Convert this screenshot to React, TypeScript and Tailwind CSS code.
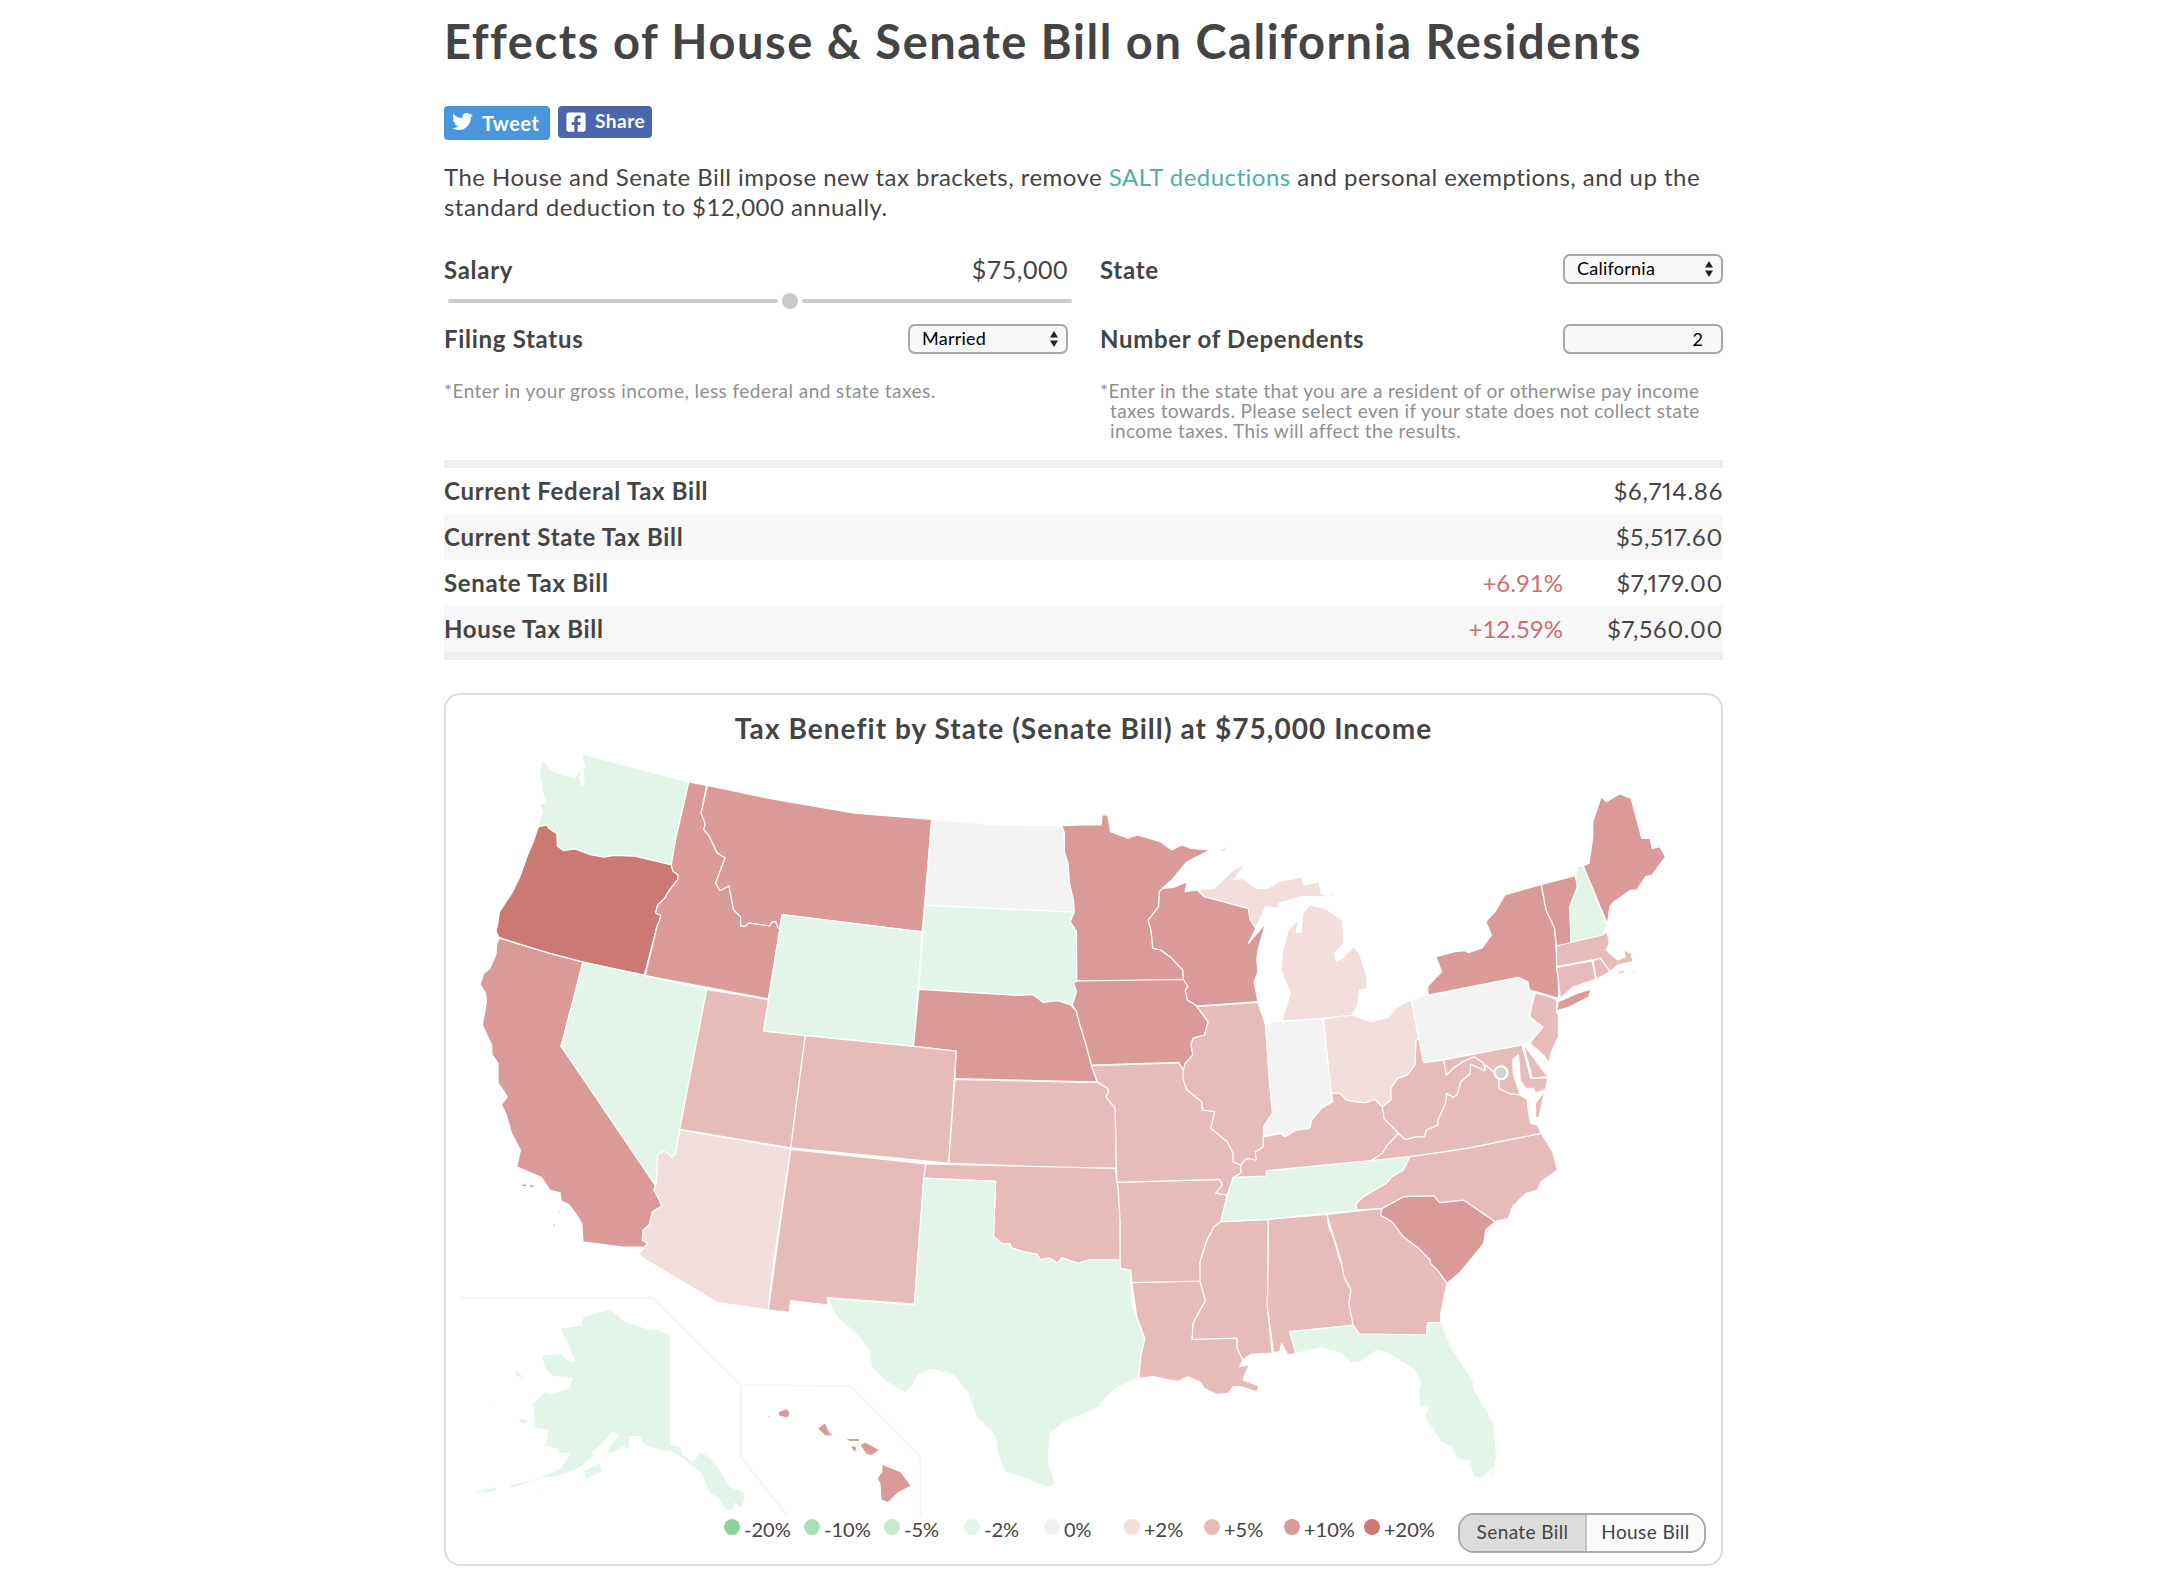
import { FaTwitter, FaFacebookSquare } from "react-icons/fa";

const Z: Record<string, [number, number, number, number]> = {
  a: [440, 740, 2.412, 2.8],
  b: [1080, 780, 2.613, 3],
  c: [440, 1260, 2.376, 3],
  d: [1100, 1260, 2.45, 3],
};
function pts(...segs: string[]) {
  const out: string[] = [];
  for (const s of segs) {
    const [ox, oy, kx, ky] = Z[s[0]];
    for (const m of s.slice(1).matchAll(/\((-?[\d.]+),(-?[\d.]+)\)/g)) {
      out.push(`${(ox + +m[1] / kx).toFixed(1)},${(oy + +m[2] / ky).toFixed(1)}`);
    }
  }
  return out.join(" ");
}
const G = "#e3f4e8", N = "#f3f3f3", P2 = "#f2dedd", P5 = "#e6bbb9", P10 = "#da9a98", P20 = "#cc7873";

const STATES: [string, string[]][] = [
  [G, ["a(345,40)(600,117)(590,170)(570,270)(562,320)(560,350)(470,325)(420,327)(415,322)(395,328)(360,320)(325,305)(298,310)(283,297)(282,262)(262,247)(258,238)(237,240)(240,225)(248,200)(240,180)(255,175)(248,150)(245,120)(240,95)(245,60)(252,60)(265,82)(290,95)(325,105)(335,90)(342,92)(336,105)(340,125)(348,128)(345,90)(350,75)(342,45)"]],
  [P20, ["a(237,243)(258,238)(262,247)(282,262)(283,297)(298,310)(325,305)(360,320)(395,328)(420,323)(470,325)(558,350)(562,367)(574,378)(573,392)(560,410)(548,430)(543,442)(525,462)(520,485)(532,490)(530,505)(524,520)(493,658)(345,622)(260,596)(143,553)(135,538)(140,510)(143,482)(175,425)(192,385)(212,320)(225,285)"]],
  [P10, ["a(143,555)(260,596)(345,622)(292,857)(520,1245)(516,1260)(528,1285)(535,1305)(512,1322)(505,1358)(490,1372)(488,1400)(500,1408)(495,1420)(440,1420)(345,1405)(342,1355)(330,1330)(310,1300)(292,1290)(290,1268)(265,1260)(245,1225)(205,1205)(185,1195)(194,1148)(172,1100)(160,1050)(148,1020)(162,1000)(155,985)(140,960)(140,905)(125,880)(125,855)(102,798)(108,760)(112,730)(110,710)(97,685)(105,655)(120,640)(135,600)(137,570)"]],
  [P10, ["a(196,1242)(208,1243)(210,1252)(198,1250)"]],
  [P10, ["a(213,1240)(235,1252)(218,1253)"]],
  [P10, ["a(276,1310)(290,1320)(288,1327)"]],
  [P10, ["a(270,1345)(280,1362)(273,1362)"]],
  [P10, ["a(600,117)(643,127)(630,205)(640,235)(636,250)(650,270)(668,315)(688,330)(665,400)(675,422)(697,408)(708,475)(725,495)(725,520)(735,522)(745,512)(780,518)(795,520)(800,510)(810,508)(815,525)(820,530)(792,725)(495,660)(524,520)(530,505)(532,490)(520,485)(525,462)(543,442)(548,430)(560,410)(573,392)(574,378)(562,367)(558,350)(562,320)(570,270)(590,170)"]],
  [P10, ["a(645,127)(800,165)(1000,205)(1186,222)(1163,537)(825,489)(820,530)(815,525)(810,508)(800,510)(795,520)(780,518)(745,512)(735,522)(725,520)(725,495)(708,475)(697,408)(675,422)(665,400)(688,330)(668,315)(650,270)(636,250)(640,235)(630,205)"]],
  [N, ["a(1186,222)(1350,238)(1500,240)(1506,260)(1506,315)(1515,345)(1518,400)(1528,450)(1530,482)(1170,463)"]],
  [G, ["a(825,489)(1163,537)(1142,858)(780,815)"]],
  [G, ["a(1170,463)(1530,482)(1520,510)(1535,535)(1536,673)(1528,680)(1535,705)(1525,742)(1490,730)(1455,735)(1430,712)(1395,715)(1155,697)"]],
  [P10, ["a(1155,698)(1395,715)(1430,713)(1455,735)(1490,730)(1522,742)(1535,760)", "b(0,735)(15,790)(30,855)(45,905)(0,905)", "a(1242,948)(1245,871)(1142,858)"]],
  [P5, ["a(643,698)(792,727)(780,815)(881,828)(846,1142)(578,1090)"]],
  [P5, ["a(881,828)(1142,858)(1245,871)(1227,1185)(846,1142)"]],
  [P5, ["a(1242,950)", "b(0,907)(45,907)(72,925)(75,935)(68,950)(92,985)(95,1165)(0,1165)", "a(1227,1185)"]],
  [G, ["a(345,622)(493,660)(643,698)(578,1090)(568,1160)(558,1168)(548,1155)(537,1152)(525,1160)(522,1240)(518,1245)(292,857)"]],
  [P2, ["a(578,1092)(846,1144)(800,1500)", "c(780,150)(660,128)(490,0)", "a(478,1440)(495,1420)(500,1408)(488,1400)(490,1372)(505,1358)(512,1322)(535,1305)(528,1285)(516,1260)(522,1240)(525,1160)(537,1152)(548,1155)(558,1168)(568,1160)"]],
  [P5, ["a(846,1146)(1172,1187)(1167,1227)", "c(1127,132)(920,113)(922,135)(833,122)(830,157)(780,150)"]],
  [P5, ["a(1172,1187)", "b(92,1165)(97,1207)(100,1230)(105,1330)(105,1440)", "a(1568,1455)(1540,1465)(1500,1450)(1490,1465)(1470,1450)(1448,1455)(1440,1440)(1415,1435)(1378,1422)(1375,1410)(1355,1410)(1335,1390)(1340,1236)(1167,1227)"]],
  [G, ["a(1167,1227)(1340,1236)(1335,1390)(1355,1410)(1375,1410)(1378,1422)(1415,1435)(1440,1440)(1448,1455)(1470,1450)(1490,1465)(1500,1450)(1540,1465)(1568,1455)", "b(105,1440)", "d(50,25)(75,30)(78,130)(90,170)(110,235)(100,290)(95,355)(45,380)(0,430)", "c(1568,440)(1480,490)(1450,520)(1445,600)(1462,670)(1445,683)(1390,655)(1340,635)(1325,580)(1320,530)(1275,470)(1255,400)(1220,345)(1165,328)(1135,345)(1125,375)(1105,398)(1060,365)(1025,320)(1020,270)(995,232)(965,195)(945,175)(920,115)(1127,135)"]],
  [P5, ["d(78,68)(245,63)(258,122)(228,190)(226,238)(336,234)(336,265)(350,300)(342,320)(365,315)(350,360)(390,378)(385,395)(345,380)(325,380)(315,400)(285,403)(255,385)(245,365)(215,350)(190,365)(130,350)(95,355)(100,290)(110,235)(90,170)"]],
  [P5, ["b(97,1207)(365,1198)(372,1215)(355,1240)(385,1245)(368,1325)(350,1340)(330,1385)(315,1440)", "d(245,10)(248,63)(78,68)(75,30)(50,25)", "b(105,1440)(105,1330)(100,1230)"]],
  [P5, ["b(368,1326)(492,1318)", "d(412,0)(410,140)(422,280)(370,283)(350,300)(336,265)(336,234)(226,238)(228,190)(258,122)(245,63)(245,10)", "b(315,1440)(330,1385)(350,1340)"]],
  [P5, ["b(492,1318)(645,1303)(650,1340)(665,1380)(678,1440)", "d(590,0)(598,50)(615,90)(610,130)(620,195)(465,215)(480,280)(460,285)(445,250)(440,275)(425,278)(410,140)(412,0)"]],
  [P5, ["b(645,1303)(790,1285)(785,1305)(815,1325)(845,1370)(885,1405)(915,1440)", "d(810,10)(830,35)(850,70)(835,160)(835,188)(803,188)(800,225)(635,222)(620,195)(610,130)(615,90)(598,50)(590,0)"]],
  [G, ["d(465,215)(620,197)(635,222)(800,225)(803,188)(837,188)(860,260)(915,365)(915,385)(965,490)(972,590)(965,625)(935,655)(915,650)(905,605)(875,595)(860,560)(835,545)(795,470)(805,440)(795,435)(785,440)(780,400)(785,370)(770,330)(715,285)(680,270)(655,290)(640,305)(615,310)(590,280)(545,263)(480,280)"]],
  [G, ["d(880,710)(910,692)(945,670)(972,610)(965,640)(920,690)"]],
  [P10, ["b(790,1285)(845,1250)(925,1247)(940,1268)(1003,1260)(1085,1325)(1060,1350)(1055,1390)(1020,1440)", "d(880,40)(850,70)(830,35)(810,10)", "b(915,1440)(885,1405)(845,1370)(815,1325)(785,1305)"]],
  [P5, ["b(722,1290)(722,1270)(740,1250)(800,1210)(815,1190)(845,1170)(862,1130)(1010,1105)(1205,1060)(1235,1115)(1248,1170)(1205,1205)(1195,1230)(1165,1240)(1130,1280)(1120,1315)(1085,1325)(1003,1260)(940,1268)(925,1247)(845,1250)(790,1285)"]],
  [G, ["b(400,1192)(487,1188)(487,1172)(760,1142)(862,1127)(845,1170)(815,1190)(800,1210)(740,1250)(722,1270)(722,1290)(492,1318)(368,1325)(385,1245)"]],
  [P5, ["b(480,1070)(525,1060)(535,1070)(565,1050)(600,1045)(605,1020)(630,985)(660,965)(655,940)(680,940)(695,960)(720,965)(745,968)(770,958)(790,980)(795,1015)(832,1060)(800,1100)(790,1120)(760,1142)(487,1172)(487,1188)(400,1192)(420,1180)(420,1155)(435,1135)(460,1140)(458,1115)(478,1100)"]],
  [P5, ["b(760,1142)(790,1120)(800,1100)(832,1060)(850,1078)(880,1070)(900,1070)(905,1050)(935,1035)(935,1020)(955,970)(958,940)(975,952)(985,945)(995,905)(1020,880)(1020,852)(1058,872)(1060,855)(1085,880)(1095,900)(1095,925)(1120,940)(1150,945)(1168,958)(1172,995)(1178,1030)(1195,1035)(1205,1060)(1010,1105)(862,1130)"]],
  [P5, ["b(1190,970)(1215,930)(1200,1010)(1190,1015)"]],
  [P5, ["b(790,980)(812,960)(812,925)(830,895)(855,885)(875,855)(878,780)(885,775)(898,848)(950,840)(958,885)(975,865)(1000,845)(1030,830)(1055,850)(1058,872)(1020,852)(1020,880)(995,905)(985,945)(975,952)(958,940)(955,970)(935,1020)(935,1035)(905,1050)(900,1070)(880,1070)(850,1078)(832,1060)(795,1015)"]],
  [P5, ["b(950,840)(1155,795)(1178,895)(1222,893)(1217,928)(1190,940)(1185,925)(1165,925)(1150,900)(1148,850)(1145,825)(1130,840)(1133,885)(1145,925)(1150,945)(1120,940)(1095,925)(1095,900)(1085,880)(1060,855)(1058,872)(1055,850)(1030,830)(1000,845)(975,865)(958,885)"]],
  [P5, ["b(1158,793)(1170,810)(1222,890)(1182,895)"]],
  [N, ["b(898,848)(865,660)(910,645)(1145,592)(1170,605)(1175,630)(1190,635)(1180,680)(1175,710)(1210,742)(1185,775)(1155,795)"]],
  [P5, ["b(1190,638)(1245,658)(1245,695)(1250,705)(1250,770)(1232,815)(1225,848)(1215,830)(1195,810)(1175,790)(1185,775)(1210,742)(1175,710)(1180,680)"]],
  [P10, ["b(910,645)(908,620)(945,575)(930,530)(980,515)(1005,512)(1015,518)(1050,505)(1075,465)(1060,425)(1085,395)(1110,345)(1205,313)(1218,390)(1240,445)(1250,600)(1250,655)(1190,635)(1175,630)(1170,605)(1145,592)"]],
  [P10, ["b(1245,692)(1250,665)(1300,640)(1335,628)(1330,650)(1280,680)"]],
  [P10, ["b(1205,313)(1295,287)(1300,320)(1280,380)(1283,490)(1245,498)(1240,445)(1218,390)"]],
  [G, ["b(1295,290)(1298,260)(1315,258)(1378,432)(1365,465)(1283,490)(1280,380)(1300,320)"]],
  [P10, ["b(1315,258)(1330,250)(1340,170)(1340,125)(1362,50)(1375,65)(1410,42)(1440,55)(1468,175)(1490,175)(1495,205)(1515,200)(1530,230)(1495,285)(1478,290)(1455,330)(1440,330)(1395,365)(1385,380)(1378,432)"]],
  [P5, ["b(1245,498)(1365,465)(1378,455)(1383,490)(1375,510)(1405,540)(1425,530)(1420,510)(1440,520)(1445,545)(1405,555)(1385,575)(1360,535)(1245,560)"]],
  [P5, ["b(1245,562)(1338,543)(1348,598)(1290,620)(1255,655)(1250,600)"]],
  [P5, ["b(1340,542)(1360,535)(1385,575)(1350,598)"]],
  [P5, ["b(1405,575)(1420,570)(1425,578)(1408,582)"]],
  [P5, ["b(1435,575)(1450,570)(1450,578)"]],
  [P10, ["b(215,325)(245,322)(280,305)(275,335)(305,330)(325,350)(440,385)(445,420)(460,445)(440,490)(485,430)(465,510)(462,540)(465,575)(455,605)(465,665)(305,678)(280,660)(275,630)(282,620)(270,600)(268,570)(235,530)(210,510)(190,505)(185,450)(178,420)(205,380)(207,335)"]],
  [P10, ["a(1500,240)(1506,260)(1506,315)(1515,345)(1518,400)(1528,450)(1530,482)(1520,510)(1535,535)(1536,673)", "b(0,603)(270,600)(268,570)(235,530)(210,510)(190,505)(185,450)(178,420)(205,380)(207,335)(215,325)(240,300)(280,245)(340,210)(290,205)(265,195)(240,210)(210,185)(150,165)(125,175)(80,155)(72,105)(58,105)(55,135)(0,135)"]],
  [P10, ["a(1536,675)(1528,680)(1535,705)(1525,742)(1535,760)", "b(0,735)(15,790)(30,855)(258,847)(270,870)(275,850)(295,825)(290,795)(295,775)(325,765)(335,725)(305,678)(280,660)(275,630)(282,620)(270,598)(0,603)"]],
  [P5, ["b(30,857)(258,849)(270,870)(270,900)(280,930)(318,965)(320,990)(352,995)(342,1045)(385,1085)(400,1120)(400,1145)(420,1155)(420,1180)(400,1192)(385,1245)(355,1240)(372,1215)(365,1198)(97,1207)(95,1165)(92,985)(68,950)(75,935)(72,925)(45,905)"]],
  [P5, ["b(305,680)(465,667)(485,735)(495,900)(503,1000)(480,1040)(478,1100)(458,1115)(460,1140)(435,1135)(420,1155)(400,1145)(400,1120)(385,1085)(342,1045)(352,995)(320,990)(318,965)(280,930)(270,900)(270,870)(275,850)(295,825)(290,795)(295,775)(325,765)(335,725)"]],
  [N, ["b(485,735)(510,725)(634,715)(657,940)(660,965)(630,985)(605,1020)(600,1045)(565,1050)(535,1070)(525,1060)(480,1070)(480,1040)(503,1000)(495,900)"]],
  [P2, ["b(636,717)(712,705)(760,725)(805,712)(830,680)(865,660)(885,775)(878,780)(875,855)(855,885)(830,895)(812,925)(812,960)(790,980)(770,958)(745,968)(720,965)(695,960)(680,940)(657,940)"]],
  [P2, ["b(527,723)(550,640)(525,570)(530,510)(545,450)(570,420)(565,460)(578,455)(582,400)(600,375)(640,385)(685,420)(690,490)(665,520)(670,545)(690,530)(715,500)(730,520)(750,590)(750,625)(730,630)(725,680)(710,705)(634,715)"]],
  [P2, ["b(310,330)(350,325)(400,270)(435,250)(400,300)(425,295)(460,325)(490,325)(520,305)(580,290)(585,315)(625,305)(630,340)(650,350)(580,350)(520,370)(515,385)(485,380)(460,445)(445,420)(440,385)(325,350)"]],
  [P2, ["b(360,215)(395,190)(375,215)"]],
  [P2, ["b(648,340)(665,345)(660,352)"]],
  [G, ["c(285,205)(335,195)(340,170)(375,155)(403,148)(425,168)(440,185)(490,205)(520,210)(548,225)(548,555)(575,560)(575,580)(600,605)(620,575)(640,590)(660,620)(690,680)(722,695)(725,720)(715,745)(700,730)(695,750)(680,750)(660,715)(640,700)(620,640)(570,590)(555,578)(505,565)(480,550)(475,530)(450,530)(450,570)(435,560)(410,580)(395,580)(410,545)(425,525)(410,518)(385,555)(362,575)(365,590)(330,625)(280,650)(240,655)(170,685)(165,675)(215,660)(250,645)(285,625)(310,580)(285,580)(275,565)(250,560)(255,510)(225,505)(220,430)(250,395)(265,400)(305,385)(315,355)(270,350)(250,330)(240,285)(290,280)(300,300)(320,305)(305,260)"]],
  [G, ["c(175,325)(195,345)(200,360)(180,345)"]],
  [G, ["c(120,415)(128,432)(122,430)"]],
  [G, ["c(185,472)(210,480)(207,493)(190,490)"]],
  [G, ["c(82,695)(130,680)(137,690)(115,698)(90,700)"]],
  [G, ["c(340,635)(380,605)(385,635)(345,660)"]],
  [G, ["c(232,680)(248,688)(240,692)"]],
  [P10, ["c(803,455)(825,445)(832,460)(825,475)(805,468)"]],
  [P10, ["c(772,478)(782,465)(785,470)"]],
  [P10, ["c(897,505)(915,487)(925,515)(937,527)(915,528)"]],
  [P10, ["c(960,535)(995,535)(998,545)(975,545)"]],
  [P10, ["c(975,558)(988,558)(992,572)(982,575)"]],
  [P10, ["c(998,555)(1010,545)(1045,570)(1025,587)(1012,582)"]],
  [P10, ["c(1050,613)(1095,635)(1120,678)(1090,697)(1065,728)(1048,720)(1045,670)(1038,655)(1050,635)"]],
];

const LEGEND: [string, string][] = [
  ["#8dd49c", "-20%"], ["#a9dfb6", "-10%"], ["#c5e9cf", "-5%"], ["#e3f4e8", "-2%"], ["#f1f1f1", "0%"],
  ["#f2dedd", "+2%"], ["#e6bbb9", "+5%"], ["#da9a98", "+10%"], ["#cc7873", "+20%"],
];

function Arrows() {
  return (
    <svg width="8" height="16" viewBox="0 0 8 16" className="shrink-0">
      <path d="M4 0 8 6.5H0ZM4 16 0 9.5h8Z" fill="#222" />
    </svg>
  );
}

function Select({ label }: { label: string }) {
  return (
    <div className="flex items-center justify-between w-[160px] h-[30px] border-2 border-[#a8a8a8] rounded-[7px] bg-[#f8f8f8] pl-[12px] pr-[8px] text-[18px] tracking-[0.25px] text-black">
      <span className="-mt-[2px]">{label}</span>
      <Arrows />
    </div>
  );
}

function Row({ label, pct, val, alt }: { label: string; pct?: string; val: string; alt?: boolean }) {
  return (
    <div className={`flex items-center h-[46px] ${alt ? "bg-[#f7f7f7]" : ""}`}>
      <span className="font-bold text-[24px] tracking-[0.7px] flex-1">{label}</span>
      {pct && <span className="text-[24px] text-[#cf6d6b]">{pct}</span>}
      <span className="text-[24px] tracking-[0.75px] text-right w-[160px] proportional-nums">{val}</span>
    </div>
  );
}

export default function App() {
  return (
    <div className="bg-white w-[1279px] ml-[444px] h-[1586px] overflow-hidden text-[#444444] font-['Lato','Liberation_Sans',sans-serif]">
      <h1 className="font-bold text-[47px] tracking-[1.55px] leading-[60px] pt-[11px] h-[106px]">Effects of House &amp; Senate Bill on California Residents</h1>
      <div className="flex gap-[8px] items-start h-[34px]">
        <div className="flex items-center gap-[9px] w-[106px] h-[34px] pl-[8px] rounded-[4px] bg-[#4a96dc] text-white font-bold text-[20px] tracking-[0.5px]">
          <FaTwitter size={21} className="-mt-[4px]" />
          <span>Tweet</span>
        </div>
        <div className="flex items-center gap-[8px] w-[94px] h-[32px] pl-[7px] rounded-[4px] bg-[#4a67ad] text-white font-bold text-[19px] tracking-[0.5px]">
          <FaFacebookSquare size={22} />
          <span className="-mt-[2px]">Share</span>
        </div>
      </div>
      <p className="text-[24px] tracking-[0.47px] leading-[30px] mt-[22px]">
        The House and Senate Bill impose new tax brackets, remove <span className="text-[#53aeaa]">SALT deductions</span> and personal exemptions, and up the standard deduction to $12,000 annually.
      </p>
      <div className="grid grid-cols-[624px_623px] gap-x-[32px] mt-[32px]">
        <div>
          <div className="flex justify-between items-center h-[32px] font-bold text-[24px] tracking-[0.7px]">
            <span>Salary</span>
            <span className="font-normal text-[25px] tracking-[0.5px]">$75,000</span>
          </div>
          <div className="flex items-center h-[20px] mt-[5px] pl-[4px]">
            <div className="w-[330px] shrink-0 h-[4px] rounded-full bg-[#cbcbcb]" />
            <div className="w-[16px] shrink-0 h-[16px] rounded-full bg-[#c9c9c9] ml-[4px]" />
            <div className="w-[270px] shrink-0 h-[4px] rounded-full bg-[#cbcbcb] ml-[4px]" />
          </div>
          <div className="flex justify-between items-center h-[30px] mt-[13px]">
            <span className="font-bold text-[24px] tracking-[0.7px]">Filing Status</span>
            <Select label="Married" />
          </div>
          <p className="text-[19px] tracking-[0.45px] leading-[20px] mt-[27px] text-[#8f8f8f]">*Enter in your gross income, less federal and state taxes.</p>
        </div>
        <div>
          <div className="flex justify-between items-center h-[32px]">
            <span className="font-bold text-[24px] tracking-[0.7px]">State</span>
            <div className="-mt-[2px]">
              <Select label="California" />
            </div>
          </div>
          <div className="flex justify-between items-center h-[30px] mt-[38px]">
            <span className="font-bold text-[24px] tracking-[0.7px]">Number of Dependents</span>
            <div className="flex items-center justify-end w-[160px] h-[30px] border-2 border-[#a8a8a8] rounded-[7px] bg-[#f8f8f8] pr-[18px] text-[18px] text-black">2</div>
          </div>
          <p className="text-[19px] tracking-[0.38px] leading-[20px] mt-[27px] text-[#8f8f8f] pl-[10px] -indent-[10px]">*Enter in the state that you are a resident of or otherwise pay income taxes towards. Please select even if your state does not collect state income taxes. This will affect the results.</p>
        </div>
      </div>
      <div className="mt-[19px] border-t-[8px] border-b-[8px] border-[#eeeeee]">
        <Row label="Current Federal Tax Bill" val="$6,714.86" />
        <Row label="Current State Tax Bill" val="$5,517.60" alt />
        <Row label="Senate Tax Bill" pct="+6.91%" val="$7,179.00" />
        <Row label="House Tax Bill" pct="+12.59%" val="$7,560.00" alt />
      </div>
      <div className="relative mt-[33px] h-[873px] border-2 border-[#dcdcdc] rounded-[16px]">
        <h2 className="font-bold text-[28px] tracking-[1.06px] text-center leading-[40px] mt-[13px]">Tax Benefit by State (Senate Bill) at $75,000 Income</h2>
        <svg viewBox="446 750 1275 813" width="1275" height="813" className="absolute left-0 top-[55px]">
          <polyline points={pts("c(50,113)(505,113)(715,375)(975,378)(1142,590)(1142,768)")} fill="none" stroke="#f6f6f6" strokeWidth="2" />
          <polyline points={pts("c(715,378)(715,590)(825,768)")} fill="none" stroke="#f6f6f6" strokeWidth="2" />
          {STATES.map(([f, s], i) => (
            <polygon key={i} points={pts(...s)} fill={f} stroke="#ffffff" strokeWidth="1.2" strokeLinejoin="round" />
          ))}
          <circle cx="1501" cy="1072.7" r="6.5" fill="#d3d3d3" stroke="#ffffff" strokeWidth="2" />
        </svg>
        <div className="absolute left-[278px] bottom-[19px] flex items-start">
          {LEGEND.map(([c, t]) => (
            <div key={t} className="flex items-start w-[80px] h-[26px]">
              <span className="w-[16px] h-[16px] rounded-full shrink-0" style={{ backgroundColor: c }} />
              <span className="ml-[4px] text-[20px] leading-[24px] text-[#444444] mt-[-2px]">{t}</span>
            </div>
          ))}
        </div>
        <div className="absolute right-[15px] bottom-[11px] flex w-[248px] h-[40px] border-2 border-[#aaaaaa] rounded-[16px] overflow-hidden text-[19px] leading-[32px] tracking-[0.4px]">
          <div className="flex items-center justify-center w-[127px] pb-[2px] bg-[#dcdcdc] border-r-2 border-[#c4c4c4]">Senate Bill</div>
          <div className="flex items-center justify-center flex-1 pb-[2px] bg-[#fafafa]">House Bill</div>
        </div>
      </div>
    </div>
  );
}
